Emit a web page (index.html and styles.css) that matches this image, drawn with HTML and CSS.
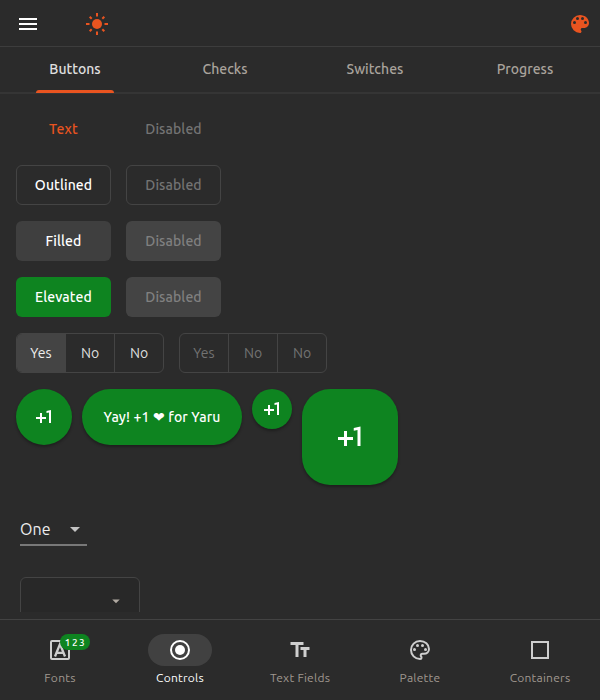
FILE: index.html
```html
<!DOCTYPE html>
<html lang="en">
<head>
<meta charset="utf-8">
<title>Controls</title>
<link rel="stylesheet" href="styles.css">
</head>
<body>
<header class="appbar">
  <svg class="icon menu" viewBox="0 0 24 24"><path d="M3 18h18v-2H3zm0-5h18v-2H3zm0-7v2h18V6z"/></svg>
  <svg class="icon sun" viewBox="0 0 24 24"><circle cx="12" cy="12" r="5"/><path class="rays" d="M12 1v3.500M12 19.500v3.500M1 12h3.500M19.500 12h3.500M4.700 4.700l2 2M17.300 17.300l2 2M4.700 19.300l2-2M17.300 6.700l2-2"/></svg>
  <svg class="icon paint" viewBox="0 0 24 24"><path d="M12 3a9 9 0 0 0 0 18c.83 0 1.500-.67 1.500-1.500 0-.39-.15-.74-.39-1.010-.23-.26-.38-.61-.38-.99 0-.83.67-1.500 1.500-1.500H16c2.760 0 5-2.240 5-5 0-4.420-4.030-8-9-8m-5.500 9a1.500 1.500 0 1 1 0-3 1.500 1.500 0 0 1 0 3m3-4a1.500 1.500 0 1 1 0-3 1.500 1.500 0 0 1 0 3m5 0a1.500 1.500 0 1 1 0-3 1.500 1.500 0 0 1 0 3m3 4a1.500 1.500 0 1 1 0-3 1.500 1.500 0 0 1 0 3"/></svg>
</header>
<nav class="tabs">
  <div class="tab active"><span>Buttons</span></div>
  <div class="tab"><span>Checks</span></div>
  <div class="tab"><span>Switches</span></div>
  <div class="tab"><span>Progress</span></div>
</nav>
<main class="content">
  <div class="row"><button class="btn text">Text</button><button class="btn disabled">Disabled</button></div>
  <div class="row"><button class="btn outlined">Outlined</button><button class="btn outlined disabled">Disabled</button></div>
  <div class="row"><button class="btn filled">Filled</button><button class="btn off disabled">Disabled</button></div>
  <div class="row"><button class="btn elevated">Elevated</button><button class="btn off disabled">Disabled</button></div>
  <div class="row">
    <div class="segments"><div class="seg selected">Yes</div><div class="seg">No</div><div class="seg">No</div></div>
    <div class="segments disabled"><div class="seg">Yes</div><div class="seg">No</div><div class="seg">No</div></div>
  </div>
  <div class="fabs">
    <button class="fab"><svg class="icon" viewBox="0 0 24 24"><path d="M10 8H8v4H4v2h4v4h2v-4h4v-2h-4zm4.500-1.920V7.900l2.500-.5V18h2V5z"/></svg></button>
    <button class="fab extended">Yay! +1 ❤ for Yaru</button>
    <button class="fab small"><svg class="icon" viewBox="0 0 24 24"><path d="M10 8H8v4H4v2h4v4h2v-4h4v-2h-4zm4.500-1.920V7.900l2.500-.5V18h2V5z"/></svg></button>
    <button class="fab large"><svg class="icon" viewBox="0 0 24 24"><path d="M10 8H8v4H4v2h4v4h2v-4h4v-2h-4zm4.500-1.920V7.900l2.500-.5V18h2V5z"/></svg></button>
  </div>
  <div class="dropdown"><span>One</span><svg class="icon" viewBox="0 0 24 24"><path d="M7 10l5 5 5-5z"/></svg></div>
  <div class="menubox"><svg class="icon" viewBox="0 0 24 24"><path d="M7 10l5 5 5-5z"/></svg></div>
</main>
<footer class="navbar">
  <div class="dest">
    <div class="pill"><svg class="icon" viewBox="0 0 24 24"><rect class="line" x="3" y="3" width="18" height="18" rx="1"/><path class="line bold" d="M7 18.500l5-12.500 5 12.500M8.500 14.800h7"/></svg><span class="badge">123</span></div>
    <span class="label fonts">Fonts</span>
  </div>
  <div class="dest current">
    <div class="pill"><svg class="icon" viewBox="0 0 24 24"><circle class="line" cx="12" cy="12" r="9"/><circle cx="12" cy="12" r="5"/></svg></div>
    <span class="label">Controls</span>
  </div>
  <div class="dest">
    <div class="pill"><svg class="icon" viewBox="0 0 24 24"><path d="M2 4v3h5v12h3V7h5V4zm10 5v3h3v7h3v-7h3V9z" transform="translate(.5)"/></svg></div>
    <span class="label">Text Fields</span>
  </div>
  <div class="dest">
    <div class="pill"><svg class="icon" viewBox="0 0 24 24"><path class="line" d="M12 3a9 9 0 0 0 0 18c1.200 0 1.500-.8 1.500-1.500 0-.9-.8-1.200-.8-2 0-1 .7-1.700 1.700-1.700H16c2.760 0 5-2.040 5-4.800C21 6.600 17 3 12 3z"/><circle cx="6.500" cy="11.500" r="1.500"/><circle cx="9.500" cy="7.500" r="1.500"/><circle cx="14.500" cy="7.500" r="1.500"/><circle cx="17.500" cy="11.500" r="1.500"/></svg></div>
    <span class="label">Palette</span>
  </div>
  <div class="dest">
    <div class="pill"><svg class="icon" viewBox="0 0 24 24"><path class="line" d="M4 4h16v16H4z"/></svg></div>
    <span class="label">Containers</span>
  </div>
</footer>
</body>
</html>
```
FILE: styles.css
```css
* { box-sizing: border-box; }
body {
  margin: 0;
  width: 600px;
  height: 700px;
  overflow: hidden;
  display: flex;
  flex-direction: column;
  background: #2b2b2b;
  color: #fff;
  font-family: Ubuntu, "Noto Sans", sans-serif;
  font-size: 14px;
  font-weight: 500;
}
button { font: inherit; color: inherit; border: 0; padding: 0; margin: 0; background: none; white-space: nowrap; }
.icon { display: block; width: 24px; height: 24px; fill: currentColor; flex: none; }
.line { fill: none; stroke: currentColor; stroke-width: 2; }
.line.bold { stroke-width: 2.300; }
.appbar { height: 47px; border-bottom: 1px solid #3d3d3d; display: flex; align-items: center; padding: 1px 8px 0 16px; }
.sun { color: #e95420; margin-left: 45px; }
.rays { stroke: currentColor; stroke-width: 2; }
.paint { color: #e95420; margin-left: auto; }
.tabs { height: 47px; display: flex; border-bottom: 2px solid #353535; color: #a9a39c; }
.tab { flex: 1; display: flex; justify-content: center; height: 47px; line-height: 45px; font-size: 14px; font-weight: 550; letter-spacing: .02px; }
.tab.active { position: relative; color: #e0e0e0; }
.tab.active::after { content: ""; position: absolute; left: 36px; bottom: 1px; width: 78px; height: 3px; border-radius: 3px 3px 0 0; background: #e95420; }
.content { height: 518px; padding: 15px 16px 0; overflow: hidden; flex: none; }
.row { display: flex; gap: 15px; margin-bottom: 16px; }
.btn { width: 95px; height: 40px; border-radius: 6px; font-size: 14px; font-weight: 550; letter-spacing: .1px; padding-bottom: 1px; }
.text { color: #e95420; font-weight: 500; letter-spacing: .15px; }
.outlined { border: 1px solid #444; }
.filled { background: #3f3f3f; }
.elevated { background: #0e8420; }
.off { background: #444; }
.btn.disabled { color: #747474; }
.btn.off { color: #808080; }
.segments { display: flex; width: 148px; height: 40px; border: 1px solid #444; border-radius: 6px; overflow: hidden; color: #dedede; font-weight: 450; }
.seg { flex: 1; text-align: center; line-height: 38px; }
.seg + .seg { border-left: 1px solid #444; }
.seg.selected { background: #444; color: #eee; }
.segments.disabled { color: #727272; }
.fabs { display: flex; align-items: flex-start; gap: 10px; }
.fab { display: flex; align-items: center; justify-content: center; width: 56px; height: 56px; border-radius: 28px; background: #0e8420; box-shadow: 0 2px 3px rgba(0, 0, 0, .3); }
.fab.extended { width: 160px; font-size: 14px; font-weight: 550; letter-spacing: .12px; }
.fab.small { width: 40px; height: 40px; }
.fab.large { width: 96px; height: 96px; }
.fab.large .icon { width: 36px; height: 36px; }
.dropdown { display: flex; align-items: center; justify-content: space-between; width: 67px; height: 33px; margin: 28px 0 0 4px; border-bottom: 2px solid #787878; font-size: 16px; font-weight: 400; color: #eee; letter-spacing: .1px; }
.dropdown .icon { color: #c4c4c4; }
.menubox { width: 120px; height: 48px; margin: 31px 0 0 4px; border: 1px solid #444; border-radius: 6px; background: #282828; display: flex; align-items: center; justify-content: flex-end; padding-right: 14px; color: #b0a9a1; }
.menubox .icon { width: 18px; height: 18px; }
.navbar { margin-top: auto; height: 81px; border-top: 1px solid #434343; display: flex; color: #cfcfcf; }
.dest { flex: 1; display: flex; flex-direction: column; align-items: center; padding-top: 14px; }
.pill { position: relative; width: 64px; height: 32px; border-radius: 16px; display: flex; align-items: center; justify-content: center; }
.current .pill { background: #414141; color: #fff; }
.label { margin-top: 3px; line-height: 18px; font-size: 12px; font-weight: 400; letter-spacing: .25px; color: #a09890; white-space: nowrap; }
.current .label { color: #fff; }
.badge { position: absolute; left: 32px; top: 0; width: 30px; height: 16px; border-radius: 8px; background: #0e8420; color: #fff; font-size: 10px; line-height: 17px; text-align: center; letter-spacing: 1.500px; padding-left: 1px; }
```
